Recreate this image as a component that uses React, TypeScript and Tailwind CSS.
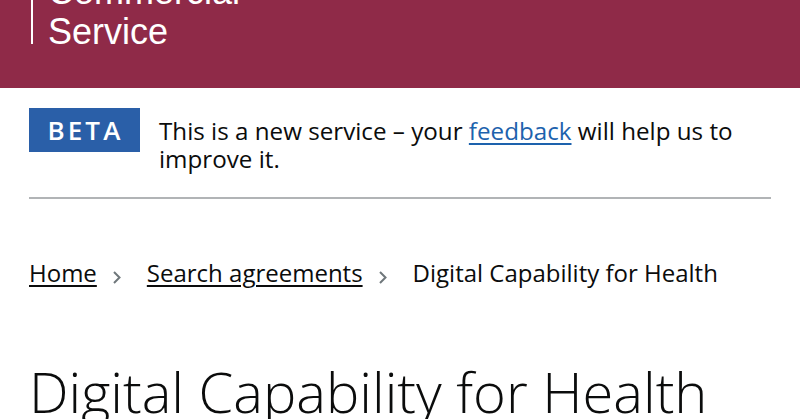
import React from "react";

const Chevron = () => (
  <svg
    width="8"
    height="13"
    viewBox="0 0 8 13"
    className="ml-[16px] mr-[26px] mt-[8px] shrink-0"
    aria-hidden="true"
  >
    <polyline points="1,1 6.5,6.5 1,12" fill="none" stroke="#6f777b" strokeWidth="2" />
  </svg>
);

export default function App() {
  return (
    <div className="min-h-screen bg-white text-[#0b0c0c] font-['Open_Sans',sans-serif] overflow-hidden">
      {/* Header band, logo is cut off at the top */}
      <header className="h-[88px] bg-[#8f2a48] overflow-hidden">
        <div className="flex -mt-[28px] ml-[31px]">
          <div className="w-[2px] h-[72px] bg-white shrink-0" />
          <div className="ml-[15px] text-white font-['Liberation_Sans',Arial,sans-serif] text-[36px] leading-[40px]">
            <div>Commercial</div>
            <div>Service</div>
          </div>
        </div>
      </header>

      <main className="px-[29px]">
        {/* Phase banner */}
        <div className="pt-[20px] pb-[24px] border-b-2 border-[#b1b4b6] flex items-start">
          <div className="w-[111px] h-[44px] bg-[#2a5fa8] text-white flex items-center justify-center text-[26px] font-semibold tracking-[0.12em] pl-[2px] shrink-0">
            BETA
          </div>
          <p className="ml-[19px] mt-[9px] text-[24.2px] leading-[28px]">
            This is a new service – your{" "}
            <a href="#" className="text-[#1d62ad] underline decoration-[1.5px] underline-offset-[3px]">
              feedback
            </a>{" "}
            will help us to improve it.
          </p>
        </div>

        {/* Breadcrumbs */}
        <nav className="mt-[60px] flex items-center text-[24px] leading-[28px]">
          <a href="#" className="underline decoration-[1.5px] underline-offset-[3px]">Home</a>
          <Chevron />
          <a href="#" className="underline decoration-[1.5px] underline-offset-[3px]">Search agreements</a>
          <Chevron />
          <span>Digital Capability for Health</span>
        </nav>

        <h1 className="mt-[76px] text-[56px] leading-[56px] font-light">Digital Capability for Health</h1>
      </main>
    </div>
  );
}
